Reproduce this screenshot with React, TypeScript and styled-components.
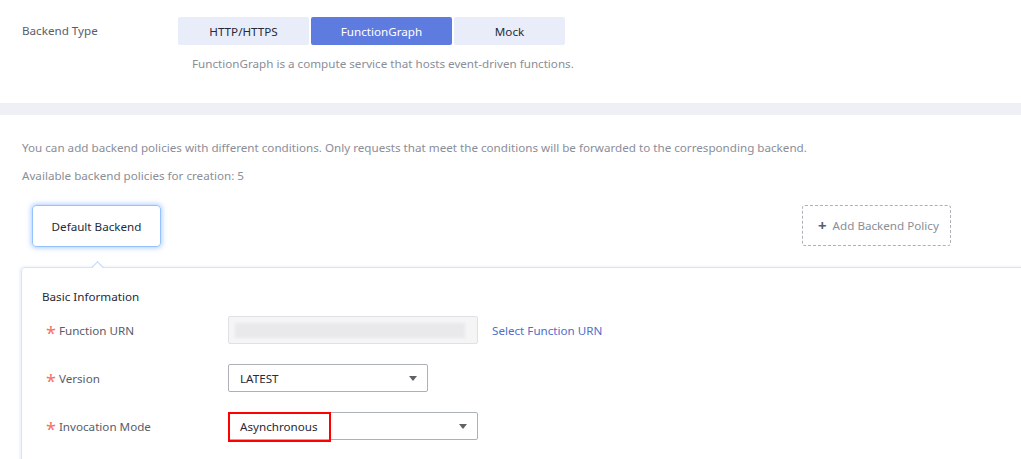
import { createGlobalStyle, styled } from "styled-components";

const GlobalStyle = createGlobalStyle`
  html, body {
    margin: 0;
    padding: 0;
    background: #ffffff;
    font-family: "Noto Sans", "Liberation Sans", Arial, sans-serif;
    font-size: 11.65px;
    color: #252b3a;
  }
  * { box-sizing: border-box; }
`;

const Page = styled.div`
  width: 1021px;
  height: 459px;
  overflow: hidden;
`;

const TopSection = styled.section`
  height: 103px;
  padding: 17px 0 0 22px;
`;

const TypeRow = styled.div`
  display: flex;
  align-items: center;
  height: 28px;
`;

const FieldLabel = styled.div`
  width: 156px;
  color: #575d6c;
  line-height: 18px;
`;

const Segments = styled.div`
  display: flex;
  gap: 2px;
`;

const Segment = styled.button<{ $active?: boolean; $width: number }>`
  width: ${(p) => p.$width}px;
  height: 28px;
  border: none;
  border-radius: 2px;
  padding: 0;
  font: inherit;
  background: ${(p) => (p.$active ? "#5e7ce0" : "#e9edf9")};
  color: ${(p) => (p.$active ? "#ffffff" : "#252b3a")};
  cursor: pointer;
`;

const Hint = styled.div`
  margin: 10px 0 0 170px;
  color: #8a8e99;
  line-height: 18px;
`;

const Band = styled.div`
  height: 12px;
  background: #eef0f5;
`;

const PolicySection = styled.section`
  padding: 24px 0 0 0;
`;

const Note = styled.p<{ $gap?: number }>`
  margin: ${(p) => p.$gap ?? 0}px 0 0 22px;
  color: #8a8e99;
  line-height: 18px;
`;

const TabsRow = styled.div`
  display: flex;
  justify-content: space-between;
  align-items: flex-start;
  margin-top: 20px;
  padding: 0 70px 0 32px;
`;

const BackendTab = styled.div`
  width: 129px;
  height: 42px;
  display: flex;
  align-items: center;
  justify-content: center;
  border: 1px solid #94c2ff;
  border-radius: 4px;
  box-shadow: 0 0 5px 1px rgba(94, 156, 255, 0.5);
  color: #252b3a;
`;

const AddPolicy = styled.button`
  width: 149px;
  height: 41px;
  display: flex;
  align-items: center;
  gap: 6px;
  padding: 0 0 0 15px;
  border: 1px dashed #adb0b8;
  border-radius: 3px;
  background: #ffffff;
  font: inherit;
  color: #8a8e99;
  cursor: pointer;
`;

const Plus = styled.span`
  font-size: 15px;
  font-weight: bold;
  color: #575d6c;
  line-height: 1;
`;

const Panel = styled.div`
  position: relative;
  margin: 20px 0 0 21px;
  width: 1020px;
  height: 200px;
  padding: 20px 0 0 20px;
  border: 1px solid #d9e4f6;
  border-radius: 4px 0 0 0;
  box-shadow: -1px 0 3px rgba(94, 140, 224, 0.18);
`;

const Caret = styled.span`
  position: absolute;
  top: -5px;
  left: 71px;
  width: 9px;
  height: 9px;
  background: #ffffff;
  border-top: 1px solid #b8d4fb;
  border-left: 1px solid #b8d4fb;
  transform: rotate(45deg);
`;

const SectionTitle = styled.div`
  color: #252b3a;
  line-height: 18px;
`;

const FormRow = styled.div<{ $first?: boolean }>`
  display: flex;
  align-items: center;
  height: 28px;
  margin-top: ${(p) => (p.$first ? 10 : 20)}px;
`;

const RowLabel = styled.label`
  width: 186px;
  padding-left: 4px;
  display: flex;
  align-items: center;
  gap: 3px;
  color: #575d6c;
`;

const Required = styled.span`
  display: inline-block;
  height: 12px;
  color: #f66f6a;
  font-size: 18px;
  line-height: 19px;
`;

const ReadonlyInput = styled.div`
  width: 250px;
  height: 28px;
  display: flex;
  align-items: center;
  padding-left: 6px;
  background: #f5f5f6;
  border: 1px solid #dfe1e6;
  border-radius: 2px;
`;

const Masked = styled.span`
  width: 230px;
  height: 15px;
  background: #e9e9ec;
  filter: blur(1px);
`;

const LinkText = styled.a`
  margin-left: 14px;
  color: #526ecc;
  text-decoration: none;
  cursor: pointer;
`;

const Select = styled.div<{ $width: number }>`
  position: relative;
  width: ${(p) => p.$width}px;
  height: 28px;
  display: flex;
  align-items: center;
  justify-content: space-between;
  padding: 0 11px;
  border: 1px solid #adb0b8;
  border-radius: 2px;
  color: #252b3a;
`;

const Arrow = styled.span`
  width: 0;
  height: 0;
  border-left: 4.5px solid transparent;
  border-right: 4.5px solid transparent;
  border-top: 5px solid #5e6166;
  margin-right: -1px;
`;

const Highlight = styled.span`
  position: absolute;
  left: -1px;
  top: -1px;
  width: 103px;
  height: 30px;
  border: 2px solid #ff0000;
  pointer-events: none;
`;

export default function App() {
  return (
    <Page>
      <GlobalStyle />
      <TopSection>
        <TypeRow>
          <FieldLabel>Backend Type</FieldLabel>
          <Segments>
            <Segment $width={131}>HTTP/HTTPS</Segment>
            <Segment $width={141} $active>
              FunctionGraph
            </Segment>
            <Segment $width={111}>Mock</Segment>
          </Segments>
        </TypeRow>
        <Hint>FunctionGraph is a compute service that hosts event-driven functions.</Hint>
      </TopSection>
      <Band />
      <PolicySection>
        <Note>
          You can add backend policies with different conditions. Only requests that meet the
          conditions will be forwarded to the corresponding backend.
        </Note>
        <Note $gap={10}>Available backend policies for creation: 5</Note>
        <TabsRow>
          <BackendTab>Default Backend</BackendTab>
          <AddPolicy>
            <Plus>+</Plus>
            Add Backend Policy
          </AddPolicy>
        </TabsRow>
        <Panel>
          <Caret />
          <SectionTitle>Basic Information</SectionTitle>
          <FormRow $first>
            <RowLabel>
              <Required>*</Required>Function URN
            </RowLabel>
            <ReadonlyInput>
              <Masked />
            </ReadonlyInput>
            <LinkText>Select Function URN</LinkText>
          </FormRow>
          <FormRow>
            <RowLabel>
              <Required>*</Required>Version
            </RowLabel>
            <Select $width={200}>
              LATEST
              <Arrow />
            </Select>
          </FormRow>
          <FormRow>
            <RowLabel>
              <Required>*</Required>Invocation Mode
            </RowLabel>
            <Select $width={250}>
              Asynchronous
              <Arrow />
              <Highlight />
            </Select>
          </FormRow>
        </Panel>
      </PolicySection>
    </Page>
  );
}
